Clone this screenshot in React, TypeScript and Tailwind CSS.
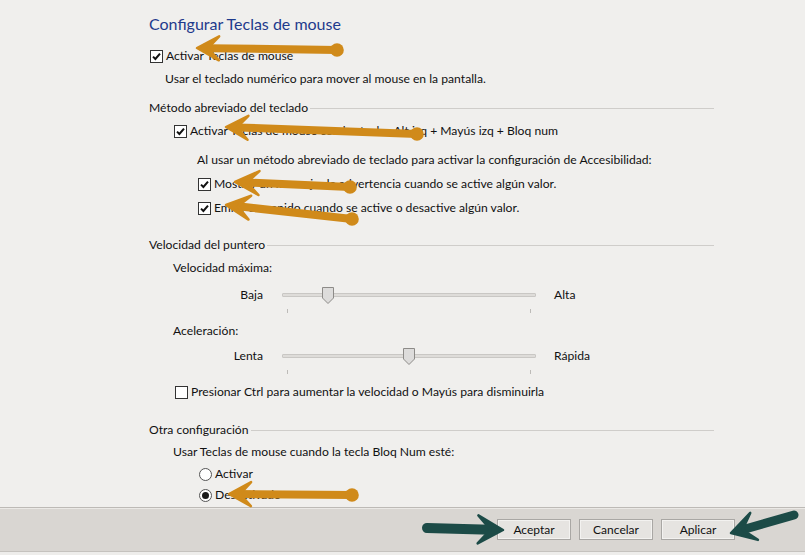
import React from 'react';

const FONT = { fontFamily: 'Lato, "Liberation Sans", sans-serif' };

function CheckBox({ checked }: { checked: boolean }) {
    return (
        <span className="flex h-[13px] w-[13px] shrink-0 items-center justify-center border border-[#333333] bg-white">
            {checked && (
                <svg width="9" height="9" viewBox="0 0 9 9">
                    <path d="M1 4.6 L3.4 7 L8 1.6" fill="none" stroke="#111" strokeWidth="2" />
                </svg>
            )}
        </span>
    );
}

function Radio({ checked }: { checked: boolean }) {
    return (
        <span className="flex h-[13px] w-[13px] shrink-0 items-center justify-center rounded-full border border-[#555555] bg-white">
            {checked && <span className="h-[7px] w-[7px] rounded-full bg-[#1a1a1a]" />}
        </span>
    );
}

function SectionHeader({ title, className }: { title: string; className: string }) {
    return (
        <div className={`flex h-[20px] w-[565px] items-center gap-[2px] ${className}`}>
            <span>{title}</span>
            <span className="h-px flex-1 bg-[#cfcdca]" />
        </div>
    );
}

function Slider({ low, high, pos, className }: { low: string; high: string; pos: number; className: string }) {
    return (
        <div className={`flex h-[20px] items-center ${className}`}>
            <span className="w-[114px] text-right">{low}</span>
            <div className="relative ml-[19px] h-[20px] w-[254px]">
                <div className="absolute left-0 right-0 top-[8px] h-[4px] rounded-[1px] border border-[#c9c7c4] bg-[#dedcd9]" />
                <svg className="absolute top-[2px]" style={{ left: pos }} width="12" height="17" viewBox="0 0 12 17">
                    <path d="M0.5 0.5 H11.5 V11 L6 16.5 L0.5 11 Z" fill="#dddcdb" stroke="#8d8b88" />
                </svg>
                <span className="absolute left-[5px] top-[24px] h-[4px] w-px bg-[#bdbbb8]" />
                <span className="absolute right-[5px] top-[24px] h-[4px] w-px bg-[#bdbbb8]" />
            </div>
            <span className="ml-[18px]">{high}</span>
        </div>
    );
}

// annotation arrow: shaft from (x1,y1) to a swept head with its tip at (x2,y2)
function Arrow({ x1, y1, x2, y2, color, width, dot, len, wing }: {
    x1: number; y1: number; x2: number; y2: number; color: string; width: number; dot: boolean; len: number; wing: number;
}) {
    const dx = x2 - x1;
    const dy = y2 - y1;
    const d = Math.hypot(dx, dy);
    const ux = dx / d;
    const uy = dy / d;
    const nx = -uy;
    const ny = ux;
    const bx = x2 - ux * len;
    const by = y2 - uy * len;
    const mx = x2 - ux * len * 0.5;
    const my = y2 - uy * len * 0.5;
    const pts = [
        `${x2},${y2}`,
        `${bx + nx * wing},${by + ny * wing}`,
        `${mx},${my}`,
        `${bx - nx * wing},${by - ny * wing}`,
    ].join(' ');
    return (
        <g>
            <line x1={x1} y1={y1} x2={mx} y2={my} stroke={color} strokeWidth={width} strokeLinecap="round" />
            {dot && <circle cx={x1} cy={y1} r={width * 0.85} fill={color} />}
            <polygon points={pts} fill={color} stroke={color} strokeWidth="2.5" strokeLinejoin="round" />
        </g>
    );
}

export default function App() {
    const orange = '#d08a1a';
    const teal = '#1c4b47';

    return (
        <div className="relative h-[555px] w-[805px] overflow-hidden bg-[#f0efed] text-[12.15px] text-[#111111]" style={FONT}>
            <div className="flex h-[507px] flex-col pl-[149px]">
                <div className="flex h-[46px] items-center pt-[1px] text-[16px] text-[#1e3a8c]">Configurar Teclas de mouse</div>

                <label className="flex h-[20px] items-center gap-[3px] pl-[1px]">
                    <CheckBox checked />
                    <span>Activar Teclas de mouse</span>
                </label>
                <div className="mt-[3px] flex h-[20px] items-center pl-[16px]">Usar el teclado numérico para mover al mouse en la pantalla.</div>

                <SectionHeader title="Método abreviado del teclado" className="mt-[9px]" />
                <label className="mt-[3px] flex h-[20px] items-center gap-[3px] pl-[25px]">
                    <CheckBox checked />
                    <span>Activar Teclas de mouse con las teclas Alt izq + Mayús izq + Bloq num</span>
                </label>
                <div className="mt-[9px] flex h-[20px] items-center pl-[48px]">Al usar un método abreviado de teclado para activar la configuración de Accesibilidad:</div>
                <label className="mt-[4px] flex h-[20px] items-center gap-[3px] pl-[49px]">
                    <CheckBox checked />
                    <span>Mostrar un mensaje de advertencia cuando se active algún valor.</span>
                </label>
                <label className="mt-[4px] flex h-[20px] items-center gap-[3px] pl-[49px]">
                    <CheckBox checked />
                    <span>Emitir un sonido cuando se active o desactive algún valor.</span>
                </label>

                <SectionHeader title="Velocidad del puntero" className="mt-[17px]" />
                <div className="mt-[3px] flex h-[20px] items-center pl-[24px]">Velocidad máxima:</div>
                <Slider low="Baja" high="Alta" pos={40} className="mt-[7px]" />
                <div className="mt-[16px] flex h-[20px] items-center pl-[24px]">Aceleración:</div>
                <Slider low="Lenta" high="Rápida" pos={121} className="mt-[5px]" />
                <label className="mt-[16px] flex h-[20px] items-center gap-[3px] pl-[26px]">
                    <CheckBox checked={false} />
                    <span>Presionar Ctrl para aumentar la velocidad o Mayús para disminuirla</span>
                </label>

                <SectionHeader title="Otra configuración" className="mt-[18px]" />
                <div className="mt-[2px] flex h-[20px] items-center pl-[24px]">Usar Teclas de mouse cuando la tecla Bloq Num esté:</div>
                <label className="mt-[2px] flex h-[20px] items-center gap-[3px] pl-[50px]">
                    <Radio checked={false} />
                    <span>Activar</span>
                </label>
                <label className="mt-[1px] flex h-[20px] items-center gap-[3px] pl-[50px]">
                    <Radio checked />
                    <span>Desactivado</span>
                </label>
            </div>

            <div className="flex h-[44px] items-center justify-end gap-[8px] border-t border-[#bdbab6] bg-[#d9d6d2] pr-[70px] shadow-[inset_0_1px_0_#ebe9e6]">
                {['Aceptar', 'Cancelar', 'Aplicar'].map((b) => (
                    <button key={b} className="h-[21px] w-[74px] border border-[#a9a7a4] bg-[#e6e4e1] text-[12px] text-[#111] shadow-[inset_0_0_0_1px_#f3f2f0]">
                        {b}
                    </button>
                ))}
            </div>
            <div className="h-[4px] border-t border-[#c5c2be] bg-[#eeedeb]" />

            <svg className="pointer-events-none absolute left-0 top-0" width="805" height="555" viewBox="0 0 805 555">
                <Arrow x1={337} y1={50} x2={197} y2={48} color={orange} width={8} dot len={22} wing={12} />
                <Arrow x1={417} y1={134} x2={226} y2={127} color={orange} width={8} dot len={22} wing={12} />
                <Arrow x1={350} y1={187} x2={235} y2={182} color={orange} width={8} dot len={24} wing={12} />
                <Arrow x1={352} y1={219} x2={226} y2={205} color={orange} width={8} dot len={24} wing={12} />
                <Arrow x1={352} y1={495} x2={229} y2={494} color={orange} width={8} dot len={22} wing={12} />
                <Arrow x1={427} y1={528} x2={503} y2={530} color={teal} width={10} dot={false} len={25} wing={14} />
                <Arrow x1={794} y1={515} x2={731} y2={533} color={teal} width={9} dot={false} len={24} wing={14} />
            </svg>
        </div>
    );
}
